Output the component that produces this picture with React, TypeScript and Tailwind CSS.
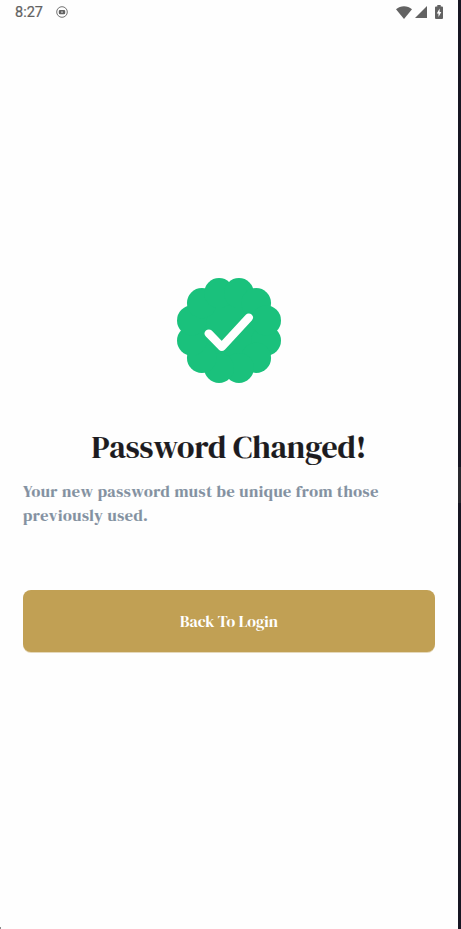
const lobes = Array.from({ length: 12 }, (_, i) => {
  const angle = ((15 + i * 30) * Math.PI) / 180;
  return { x: 52 + 38.4 * Math.cos(angle), y: 52 + 38.4 * Math.sin(angle) };
});

function StatusBar() {
  return (
    <header className="flex h-6 items-center pl-[15px] pr-[15px] text-[#626262]">
      <span className="pt-px font-[Roboto] text-[14.5px] leading-6 font-normal [-webkit-text-stroke:0.2px_#626262]">8:27</span>
      <svg className="ml-[13px] size-3" viewBox="0 0 12 12" fill="none">
        <circle cx="6" cy="6" r="5.3" stroke="currentColor" strokeWidth="0.9" />
        <rect x="2.8" y="3.9" width="6.4" height="4.4" rx="1.2" fill="currentColor" />
        <circle cx="6" cy="6.1" r="0.9" fill="#c8c8c8" />
      </svg>
      <svg className="ml-auto h-[13px] w-4" viewBox="0 0 16 13" fill="currentColor">
        <path d="M0 3.2C4.5-.8 11.5-.8 16 3.2L8 13Z" />
      </svg>
      <svg className="ml-[3px] size-3" viewBox="0 0 12 12" fill="currentColor">
        <path d="M12 0V12H0Z" />
      </svg>
      <svg className="ml-2 h-[14px] w-2" viewBox="0 0 8 14">
        <path fill="currentColor" d="M2.3 0h3.4v1.4H7a1 1 0 0 1 1 1V13a1 1 0 0 1-1 1H1a1 1 0 0 1-1-1V2.4a1 1 0 0 1 1-1h1.3Z" />
        <path fill="#fff" d="M4.6 3.6v3.3h1.7L3.5 12V8.6H1.8Z" />
      </svg>
    </header>
  );
}

function SuccessBadge() {
  return (
    <svg className="mx-auto block h-[105px] w-[104px]" viewBox="0 0 104 104" preserveAspectRatio="none">
      <g fill="#1ac17c">
        <circle cx="52" cy="52" r="43" />
        {lobes.map((lobe, i) => (
          <circle key={i} cx={lobe.x} cy={lobe.y} r="14.9" />
        ))}
      </g>
      <path d="M31.8 55 44.8 68.2 71.8 39.2" fill="none" stroke="#fff" strokeWidth="8.2" strokeLinecap="round" strokeLinejoin="round" />
    </svg>
  );
}

export default function App() {
  return (
    <div className="flex h-[929px] w-[461px] overflow-hidden bg-[#fefefe] font-['DM_Serif_Display','Liberation_Serif',serif]">
      <div className="flex min-w-0 flex-1 flex-col">
        <StatusBar />
        <main className="flex flex-1 flex-col px-[23px] pt-[254px]">
          <SuccessBadge />
          <h1 className="mt-[44px] text-center text-[31.75px] leading-10 font-normal whitespace-nowrap text-[#1c1b20] [-webkit-text-stroke:0.2px_#1c1b20]">
            Password Changed!
          </h1>
          <p className="mt-3 text-[16px] leading-6 font-normal tracking-[0.58px] whitespace-nowrap text-[#8391a1] [-webkit-text-stroke:0.2px_#8391a1]">
            Your new password must be unique from those
            <br />
            previously used.
          </p>
          <button className="mt-[63px] h-[62px] w-full rounded-lg bg-[#c1a054] pt-0.5 text-[15.9px] font-normal text-white shadow-[0_1px_0_#c1a05466]">
            Back To Login
          </button>
        </main>
        <div className="h-0.5 w-px bg-[#8a8a8a]" />
      </div>
      <div className="flex w-[3px] flex-col bg-[#171623] pt-[467px]">
        <div className="h-9 bg-[#29292f]" />
      </div>
    </div>
  );
}
